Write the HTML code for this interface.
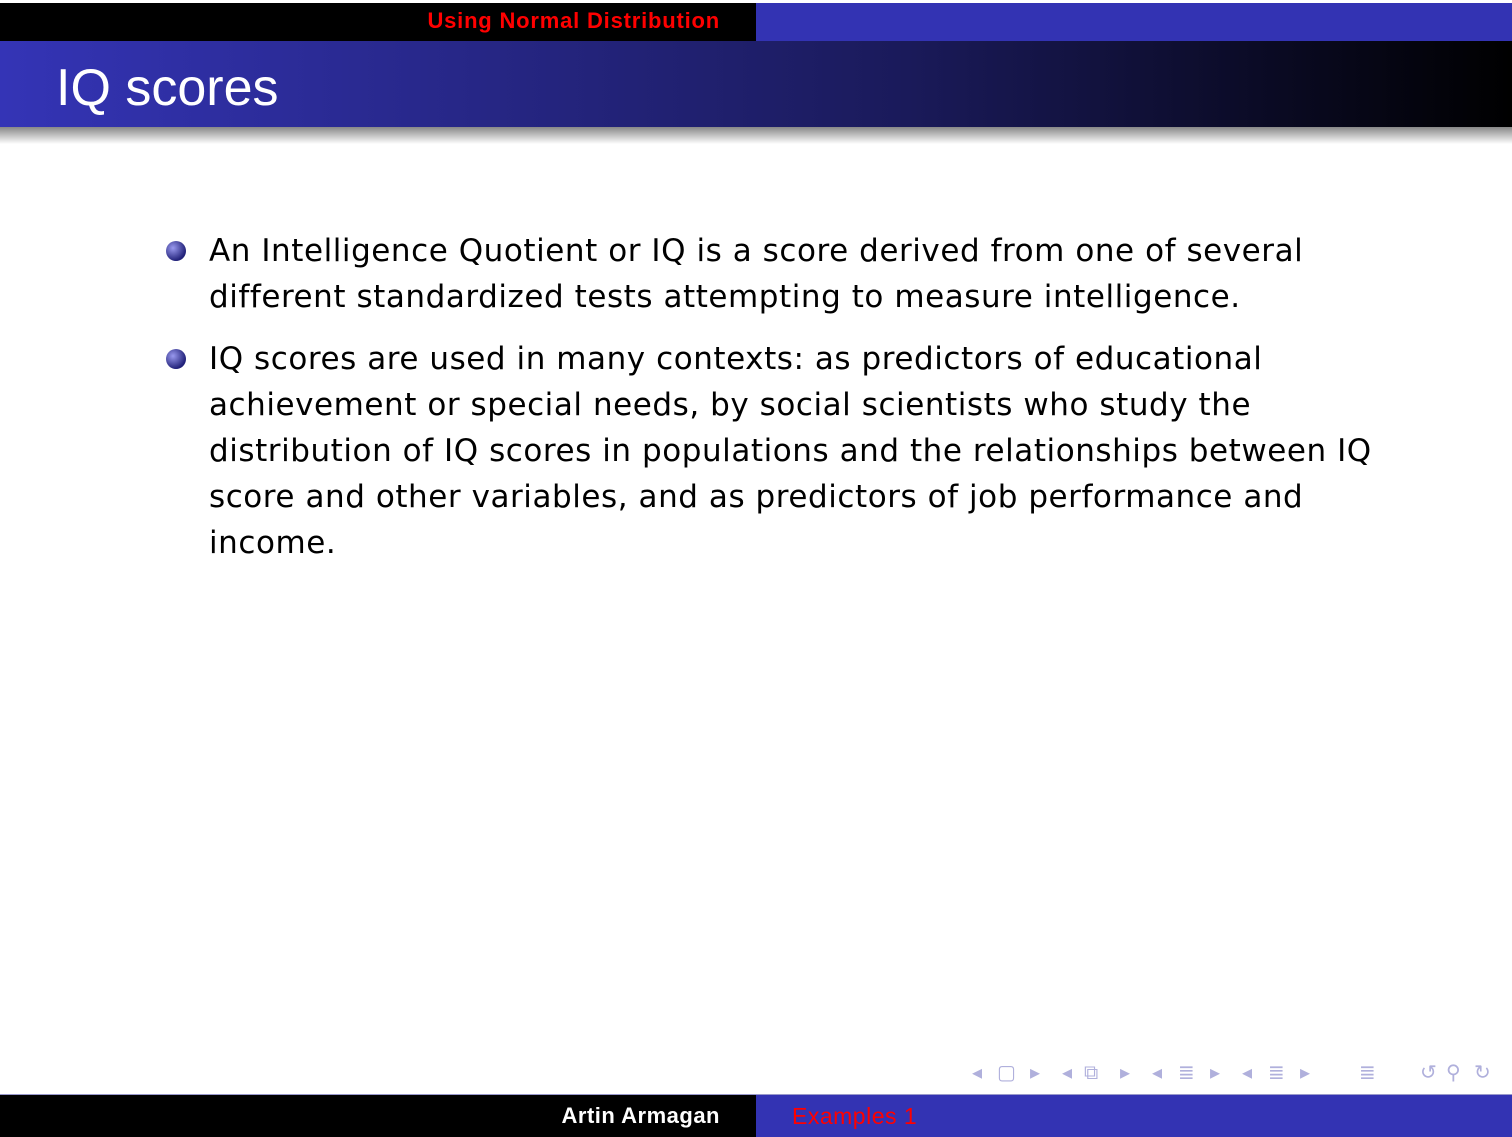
<!DOCTYPE html>
<html><head><style>
body{margin:0;width:1512px;height:1137px;background:#fff;position:relative;overflow:hidden;font-family:"DejaVu Sans","Liberation Sans",sans-serif;}
.a{position:absolute}
.txt{font-size:31px;color:#000;line-height:46px;letter-spacing:0.55px}
.nav{color:#b0b0dc;font-size:20px;line-height:24px;top:1060px}
</style></head><body>
<div class="a" style="left:0;top:3px;width:756px;height:38px;background:#000"></div>
<div class="a" style="left:756px;top:3px;width:756px;height:38px;background:#3333b3"></div>
<div class="a" style="left:0;top:3px;width:720px;text-align:right;color:#f00;font-size:22px;font-weight:bold;line-height:36px;font-family:'Liberation Sans',sans-serif;letter-spacing:0.8px">Using Normal Distribution</div>
<div class="a" style="left:0;top:41px;width:1512px;height:86px;background:linear-gradient(to right,#3434b6,#1a1a5a 60%,#000)"></div>
<div class="a" style="left:0;top:127px;width:1512px;height:17px;background:linear-gradient(#888,#fff)"></div>
<div class="a" style="left:56px;top:56px;color:#fff;font-size:52px;line-height:64px;font-family:'Liberation Sans',sans-serif">IQ scores</div>
<div class="a" style="left:166px;top:241px;width:20px;height:20px;border-radius:50%;background:radial-gradient(circle at 35% 35%,#9999ee,#22227a 70%)"></div>
<div class="a" style="left:166px;top:349px;width:20px;height:20px;border-radius:50%;background:radial-gradient(circle at 35% 35%,#9999ee,#22227a 70%)"></div>
<div class="a txt" style="left:209px;top:228px;width:1250px">An Intelligence Quotient or IQ is a score derived from one of several<br>different standardized tests attempting to measure intelligence.</div>
<div class="a txt" style="left:209px;top:336px;width:1250px">IQ scores are used in many contexts: as predictors of educational<br>achievement or special needs, by social scientists who study the<br>distribution of IQ scores in populations and the relationships between IQ<br>score and other variables, and as predictors of job performance and<br>income.</div>
<div class="a nav" style="left:972px">◂</div><div class="a nav" style="left:997px">▢</div><div class="a nav" style="left:1030px">▸</div>
<div class="a nav" style="left:1062px">◂</div><div class="a nav" style="left:1084px">⧉</div><div class="a nav" style="left:1120px">▸</div>
<div class="a nav" style="left:1152px">◂</div><div class="a nav" style="left:1178px">≣</div><div class="a nav" style="left:1210px">▸</div>
<div class="a nav" style="left:1242px">◂</div><div class="a nav" style="left:1268px">≣</div><div class="a nav" style="left:1300px">▸</div>
<div class="a nav" style="left:1359px">≣</div>
<div class="a nav" style="left:1420px">↺</div><div class="a nav" style="left:1446px">⚲</div><div class="a nav" style="left:1474px">↻</div>
<div class="a" style="left:0;top:1094px;width:1512px;height:1px;background:#9999cc"></div>
<div class="a" style="left:0;top:1095px;width:756px;height:42px;background:#000"></div>
<div class="a" style="left:756px;top:1095px;width:756px;height:42px;background:#3333b3"></div>
<div class="a" style="left:0;top:1097px;width:720px;text-align:right;color:#fff;font-size:22px;font-weight:bold;line-height:38px;font-family:'Liberation Sans',sans-serif;letter-spacing:0.5px">Artin Armagan</div>
<div class="a" style="left:792px;top:1097px;color:#f00;font-size:23px;line-height:38px;font-family:'Liberation Sans',sans-serif;letter-spacing:0.5px">Examples 1</div>
</body></html>
